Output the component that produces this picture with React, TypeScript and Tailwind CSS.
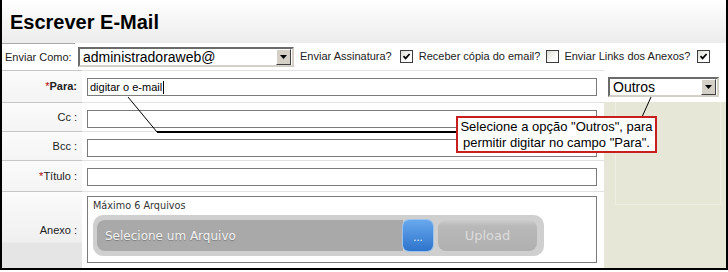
import React from 'react';

const labelBg =
  'bg-[linear-gradient(to_bottom,#fbfbfb_0px,#efefef_50px,#e5e5e5_51px,#e5e5e5_100%)]';

const Check = ({ on }: { on?: boolean }) => (
  <span className="w-[13px] h-[13px] shrink-0 border border-[#3c3c3c] bg-[linear-gradient(135deg,#dcdcd6,#ffffff_70%)] flex items-center justify-center">
    {on && (
      <svg width="9" height="9" viewBox="0 0 9 9">
        <path d="M1.5 4.2 L3.6 6.4 L7.6 2" stroke="#000" strokeWidth="1.7" fill="none" />
      </svg>
    )}
  </span>
);

const Arrow = () => (
  <span className="w-[15px] h-[16px] shrink-0 bg-[#d4d0c8] border border-t-white border-l-white border-b-[#404040] border-r-[#404040] flex items-center justify-center">
    <svg width="7" height="4" viewBox="0 0 7 4">
      <path d="M0 0 H7 L3.5 4 Z" fill="#000" />
    </svg>
  </span>
);

const Select = ({ value, className }: { value: string; className: string }) => (
  <div
    className={`h-[20px] bg-white border-2 border-t-[#6b6b6b] border-l-[#6b6b6b] border-b-[#d4d0c8] border-r-[#d4d0c8] flex items-center justify-between pr-px ${className}`}
  >
    <span className="pl-[3px] text-[14px] leading-none text-black">{value}</span>
    <Arrow />
  </div>
);

const Row = ({
  label,
  req,
  bold,
  h,
  children,
}: {
  label: string;
  req?: boolean;
  bold?: boolean;
  h: string;
  children: React.ReactNode;
}) => (
  <div className={`flex ${h}`}>
    <div
      className={`w-[80px] shrink-0 border-t border-[#c6c6c6] ${labelBg} flex items-center justify-end pr-[5px] text-[11px] text-[#222]`}
    >
      {req && <span className="text-[#b00000]">*</span>}
      <span className={bold ? 'font-bold' : ''}>{label}</span>
    </div>
    <div className="flex-1 border-t border-[#e2e2e2] pl-[5px] pt-[7px]">{children}</div>
  </div>
);

const Field = ({ children }: { children?: React.ReactNode }) => (
  <div className="w-[510px] h-[18px] border border-[#7b7b7b] bg-white flex items-center pl-[2px] text-[11px] text-black">
    {children}
  </div>
);

export default function App() {
  return (
    <div className="w-[728px] h-[272px] bg-white relative font-['Liberation_Sans',Arial,sans-serif]">
      <div className="h-[270px] border-l-2 border-r-2 border-b-2 border-black flex flex-col">
        {/* Title */}
        <div className="h-[43px] shrink-0 bg-gradient-to-b from-white to-[#ececec] flex items-center pl-[8px]">
          <h1 className="text-[20px] font-bold text-black">Escrever E-Mail</h1>
        </div>

        {/* Enviar como */}
        <div className="h-[27px] shrink-0 flex items-center text-[11px] text-[#222]">
          <div className="w-[73px] h-full border-t border-[#a8a8a8] flex items-center pl-[3px]">Enviar Como:</div>
          <Select value="administradoraweb@" className="ml-[3px] w-[216px]" />
          <span className="ml-[6px]">Enviar Assinatura?</span>
          <span className="ml-[8px]"><Check on /></span>
          <span className="ml-[6px]">Receber cópia do email?</span>
          <span className="ml-[6px]"><Check /></span>
          <span className="ml-[5px]">Enviar Links dos Anexos?</span>
          <span className="ml-[7px]"><Check on /></span>
        </div>

        <div className="flex flex-1">
          {/* Form */}
          <div className="w-[602px] flex flex-col">
            <Row label="Para:" req bold h="h-[32px]">
              <Field>
                digitar o e-mail<span className="ml-px w-px h-[13px] bg-black" />
              </Field>
            </Row>
            <Row label="Cc :" h="h-[29px]">
              <Field />
            </Row>
            <Row label="Bcc :" h="h-[29px]">
              <Field />
            </Row>
            <Row label="Título :" req h="h-[31px]">
              <Field />
            </Row>
            <div className="flex flex-1">
              <div
                className={`w-[80px] border-t border-[#c6c6c6] ${labelBg} flex items-center justify-end pr-[5px] text-[11px] text-[#222]`}
              >
                Anexo :
              </div>
              <div className="flex-1 border-t border-[#e2e2e2] pl-[5px] pt-[4px]">
                <div className="w-[510px] h-[67px] border border-[#7b7b7b] bg-white px-[5px] pt-[3px]">
                  <div className="text-[9.7px] leading-[12px] text-[#333] font-['DejaVu_Sans',Verdana,sans-serif]">
                    Máximo 6 Arquivos
                  </div>
                  <div className="mt-[3px] w-[451px] h-[41px] rounded-[10px] bg-[#cfcfcf] flex items-center pl-[4px] font-['DejaVu_Sans',Verdana,sans-serif]">
                    <div className="w-[306px] h-[31px] rounded-l-[8px] bg-[#a9a9a9] flex items-center pl-[8px] text-[12px] text-[#f2f2f2] [text-shadow:0_1px_1px_#7a7a7a]">
                      Selecione um Arquivo
                    </div>
                    <div className="w-[30px] h-[31px] rounded-[6px] bg-gradient-to-b from-[#68a8ee] to-[#2d74cc] ring-1 ring-[#9cc3ee] flex items-end justify-center pb-[8px] text-[10px] leading-none text-white">
                      ...
                    </div>
                    <div className="ml-[5px] w-[99px] h-[31px] rounded-[8px] bg-[linear-gradient(to_bottom,#cdcdcd_0px,#b9b9b9_6px,#b0b0b0_100%)] flex items-center justify-center text-[13px] text-[#dcdcdc]">
                      Upload
                    </div>
                  </div>
                </div>
              </div>
            </div>
          </div>

          {/* Right column */}
          <div className="flex-1 flex flex-col">
            <div className="h-[32px] shrink-0 pl-[4px] pt-[7px]">
              <Select value="Outros" className="w-[111px]" />
            </div>
            <div className="flex-1 bg-[#e7e7d7]">
              <div className="ml-[11px] mr-[5px] h-[103px] border-l border-r border-b border-[#efefe4]" />
            </div>
          </div>
        </div>
      </div>

      {/* Annotation */}
      <svg className="absolute inset-0 pointer-events-none" width="728" height="272">
        <line x1="128" y1="97" x2="157" y2="132" stroke="#000" strokeWidth="1" />
        <line x1="157" y1="132" x2="457" y2="132" stroke="#000" strokeWidth="2" />
        <line x1="642" y1="117" x2="651" y2="97" stroke="#000" strokeWidth="1" />
      </svg>
      <div className="absolute left-[456px] top-[116px] w-[201px] h-[37px] border-2 border-[#c81e1e] bg-white text-center text-[13px] leading-[16px] pt-px text-black">
        Selecione a opção "Outros", para
        <br />
        permitir digitar no campo "Para".
      </div>
    </div>
  );
}
